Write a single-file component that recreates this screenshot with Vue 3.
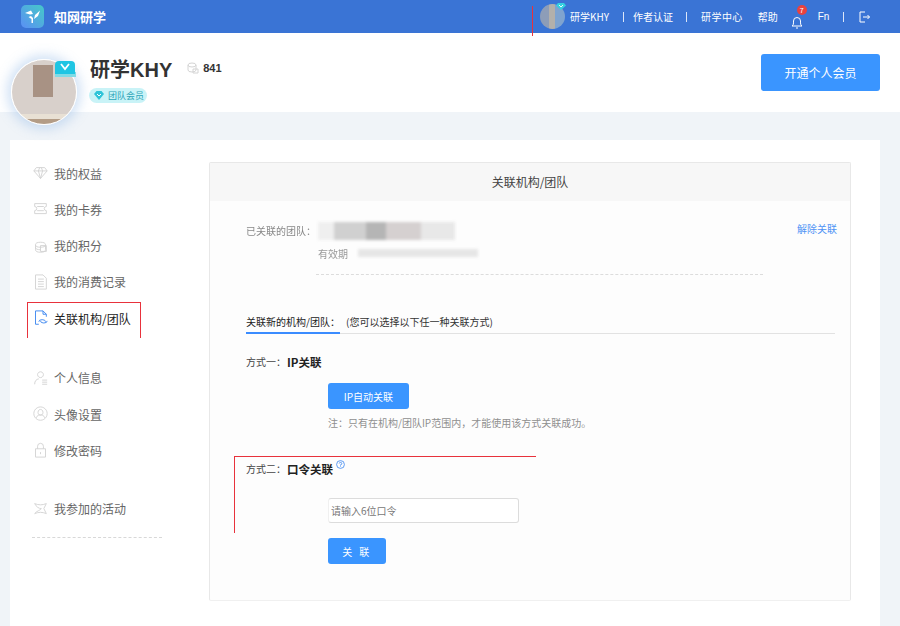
<script setup>
const groups = [
  { items: [
    { label: '我的权益', d: 'M4 3h10l3 4-8 9-8-9zM1 7h16M6.500 7 9 16l2.500-9M6.500 7 8 3M11.500 7 10 3' },
    { label: '我的卡券', d: 'M2 3h14v3.500a2.500 2.500 0 0 0 0 5V15H2v-3.500a2.500 2.500 0 0 0 0-5zM5 6.500h8M5 11.500h8' },
    { label: '我的积分', d: 'M3 8a6 3 0 0 1 12 0v6a6 3 0 0 1-12 0zM3 8a6 3 0 0 0 12 0M3 11a6 3 0 0 0 6 3M9 9h7v7H9z' },
    { label: '我的消费记录', d: 'M3 1h9l4 4v13H3zM6 6h7M6 9h7M6 12h7M6 15h7' },
    { label: '关联机构/团队', active: true, d: 'M12 1H3v16h4M12 1l4 4v3M12 1v4h4M7 14a4 2.500 0 0 1 8 0M17 13a4 2.500 0 0 1-8 0' }
  ] },
  { items: [
    { label: '个人信息', d: 'M9 2a3.500 3.500 0 1 1-.01 0M2 17c0-4 2-6 5-6.500M11 12h6M11 14.500h6M11 17h6' },
    { label: '头像设置', d: 'M9 1a8 8 0 1 1-.01 0M9 4a3 3.500 0 1 1-.01 0M4 14c1-3 3-3.500 5-3.500s4 .5 5 3.500' },
    { label: '修改密码', d: 'M3 8h12v10H3zM5.500 8V5a3.500 3.500 0 0 1 7 0v3M9 12v2.500' }
  ] },
  { items: [
    { label: '我参加的活动', d: 'M2 3c5 2 9 2 14 0l-3 6 3 6c-5-2-9-2-14 0 2-3 7-4 8-6-3 0-6-2-8-6z' }
  ] }
]
</script>

<template>
  <div class="page">
    <header class="topbar">
      <svg class="logo" viewBox="0 0 23 23">
        <defs>
          <linearGradient id="lg" x1="0" y1="1" x2="1" y2="0">
            <stop offset="0" stop-color="#5b8ff5" />
            <stop offset="1" stop-color="#45c8c8" />
          </linearGradient>
        </defs>
        <rect width="23" height="23" rx="5" fill="url(#lg)" />
        <path d="M4 8l6-2.500 2 3.500-3 .5zM19 5.500 14 10l-1 4 4-3zM10 11l2 2v5h-1.500v-4l-3-2z" fill="#fff" />
      </svg>
      <span class="brand">知网研学</span>
      <div class="user-links">
        <div class="mini-avatar">
          <svg class="mini-v" viewBox="0 0 10 7" width="10" height="7">
            <path d="M2 0h6l2 2.500L5 7 0 2.500z" fill="#35d0e0" />
            <path d="M3 2l2 2 2-2" fill="none" stroke="#fff" stroke-width=".9" />
          </svg>
        </div>
        <span class="link user">研学KHY</span>
        <i class="sep s1"></i>
        <span class="link">作者认证</span>
        <i class="sep s2"></i>
        <span class="link center">研学中心</span>
        <span class="link help">帮助</span>
        <div class="bell">
          <svg viewBox="0 0 12 14" width="12" height="14" fill="none" stroke="#fff" stroke-width="1">
            <path d="M1 11c1.500-1 1.500-2 1.500-5a3.500 3.500 0 0 1 7 0c0 3 0 4 1.500 5zM5 13h2" />
          </svg>
          <b class="dot">7</b>
        </div>
        <span class="link fn">Fn</span>
        <i class="sep s3"></i>
        <svg class="logout" viewBox="0 0 11 12" width="11" height="12" fill="none" stroke="#fff" stroke-width="1">
          <path d="M6 1H1v10h5M4 6h6.500M8.500 4l2 2-2 2" />
        </svg>
      </div>
    </header>

    <section class="profile">
      <div class="avatar">
        <div class="avatar-face"></div>
        <i class="avatar-band"></i>
        <svg class="avatar-v" viewBox="0 0 20 13" width="20" height="13">
          <path d="M4 0h12a4 4 0 0 1 4 4v9H0V4a4 4 0 0 1 4-4z" fill="#1fc5e3" />
          <path d="M6 3l4 5 4-5" fill="none" stroke="#fff" stroke-width="1.800" />
        </svg>
      </div>
      <div class="who">
        <div class="name-row">
          <span class="name">研学KHY</span>
          <svg class="coin" viewBox="0 0 12 12" width="12" height="12" fill="none" stroke="#d4d4d4" stroke-width="1">
            <path d="M1 3a4 2 0 0 1 8 0v5a4 2 0 0 1-8 0zM1 3a4 2 0 0 0 8 0M6 7h5v4H6z" />
          </svg>
          <span class="points">841</span>
        </div>
        <div class="pill">
          <svg viewBox="0 0 10 9" width="10" height="9"><path d="M2.500 0h5L10 3 5 9 0 3z" fill="#2fc4d8" /><path d="M3 3l2 2 2-2" stroke="#fff" fill="none" /></svg>
          <span>团队会员</span>
        </div>
      </div>
      <button class="vip-btn">开通个人会员</button>
    </section>

    <main class="main">
      <nav class="side">
        <div v-for="(group, g) in groups" :key="g" class="nav-group">
          <div v-for="item in group.items" :key="item.label" class="nav-item" :class="{ active: item.active }">
            <svg viewBox="0 0 18 19" width="15" height="16" fill="none" stroke="currentColor" stroke-width="1.100" class="nav-icon">
              <path :d="item.d" />
            </svg>
            <span>{{ item.label }}</span>
          </div>
        </div>
        <div class="side-rule"></div>
      </nav>

      <section class="card">
        <h2 class="card-head">关联机构/团队</h2>
        <div class="card-body">
          <div class="linked">
            <span class="linked-label">已关联的团队&#xFF1A;</span>
            <div class="linked-info">
              <div class="blur-name"></div>
              <div class="validity">
                <span class="validity-label">有效期</span>
                <i class="blur-date"></i>
              </div>
              <div class="linked-rule"></div>
            </div>
            <a class="unlink">解除关联</a>
          </div>

          <div class="tabs">
            <span class="tab">关联新的机构/团队&#xFF1A;</span>
            <span class="tab-note">(您可以选择以下任一种关联方式)</span>
          </div>

          <div class="way way-one"><span>方式一&#xFF1A;</span><b>IP关联</b></div>
          <div class="indent">
            <button class="btn auto">IP自动关联</button>
            <p class="note">注&#xFF1A;只有在机构/团队IP范围内&#xFF0C;才能使用该方式关联成功。</p>
          </div>

          <div class="way way-two">
            <span>方式二&#xFF1A;</span><b>口令关联</b>
            <svg class="help-icon" viewBox="0 0 9 9" width="9" height="9" fill="none" stroke="#3a85f0" stroke-width=".8">
              <circle cx="4.500" cy="4.500" r="3.900" />
              <path d="M3.200 3.500a1.300 1.200 0 1 1 1.300 1.300V5.600M4.500 6.300v.6" />
            </svg>
          </div>
          <div class="indent">
            <input class="code" placeholder="请输入6位口令" />
            <button class="btn link-btn">关 联</button>
          </div>
        </div>
      </section>
    </main>

    <i class="mark mark-a"></i>
    <i class="mark mark-b"></i>
    <i class="mark mark-c"></i>
  </div>
</template>

<style>
html, body { margin: 0; background: #f0f4f8; }
</style>

<style scoped>
.page {
  position: relative;
  width: 900px;
  height: 626px;
  overflow: hidden;
  background: #f0f4f8;
  font-family: "Noto Sans CJK SC", "Liberation Sans", sans-serif;
  color: #333;
}
.topbar {
  height: 33px;
  background: #3a74d5;
  display: flex;
  align-items: center;
  padding-left: 21px;
  color: #fff;
}
.logo { width: 23px; height: 23px; }
.brand { margin-left: 10px; font-size: 13px; font-weight: 700; }
.user-links { margin-left: 434px; display: flex; align-items: center; }
.mini-avatar {
  position: relative;
  width: 25px;
  height: 25px;
  border-radius: 50%;
  background:
    linear-gradient(90deg, #8d9db8 0 35%, #b3b0ab 35% 60%, #7fa3cf 60%);
}
.mini-v { position: absolute; right: -1px; top: -1px; }
.link { font-size: 10px; line-height: 1; white-space: nowrap; }
.user { margin-left: 5px; }
.sep { width: 1px; height: 10px; background: #dbe6f8; }
.s1 { margin: 0 9px 0 14px; }
.s2 { margin: 0 14px 0 13px; }
.s3 { margin: 0 15px 0 14px; }
.center { letter-spacing: .4px; }
.help { margin-left: 15px; }
.bell { position: relative; margin-left: 13px; height: 14px; }
.dot {
  position: absolute;
  left: 6px;
  top: -5px;
  width: 10px;
  height: 10px;
  border-radius: 50%;
  background: #e8423f;
  font-size: 7px;
  line-height: 10px;
  font-weight: 400;
  text-align: center;
}
.fn { margin-left: 15px; font-family: "Liberation Sans", sans-serif; }

.profile {
  height: 79px;
  background: #fff;
  display: flex;
  align-items: flex-start;
  padding: 0 20px 0 11px;
  box-sizing: border-box;
}
.avatar {
  position: relative;
  z-index: 2;
  width: 66px;
  height: 66px;
  margin-top: 26px;
}
.avatar-face {
  width: 66px;
  height: 66px;
  border-radius: 50%;
  border: 1px solid #fff;
  box-sizing: border-box;
  box-shadow: 0 0 12px 4px rgba(120, 170, 225, .35);
  background:
    linear-gradient(90deg, transparent 0 33%, #a89284 33% 64%, transparent 64%) 0 5px / 100% 32px no-repeat,
    linear-gradient(180deg, #d8d0cb 0 84%, #e8e0d4 84% 92%, #b39c86 92%);
}
.avatar-band {
  position: absolute;
  left: 44px;
  top: 13px;
  width: 21px;
  height: 5px;
  background: #7fdbe6;
}
.avatar-v { position: absolute; right: 2px; top: 2px; }
.who { margin-left: 13px; padding-top: 23px; }
.name-row { display: flex; align-items: center; height: 24px; }
.name { font-size: 20px; font-weight: 700; color: #333; font-family: "Liberation Sans", "Noto Sans CJK SC", sans-serif; }
.coin { margin-left: 15px; }
.points { margin-left: 4px; font-size: 11px; font-weight: 700; font-family: "Liberation Sans", sans-serif; }
.pill {
  display: inline-flex;
  align-items: center;
  gap: 4px;
  height: 15px;
  margin: 8px 0 0 -1px;
  padding: 0 3px 0 5px;
  border-radius: 8px;
  background: #c9f3f7;
  color: #2ba5b8;
  font-size: 9px;
  line-height: 1;
}
.vip-btn {
  margin: 21px 0 0 auto;
  width: 119px;
  height: 37px;
  border: 0;
  border-radius: 3px;
  background: #3a95ff;
  color: #fff;
  font: 12px "Noto Sans CJK SC", sans-serif;
}

.main {
  margin: 28px 20px 0 10px;
  height: 486px;
  background: #fff;
  display: flex;
  align-items: flex-start;
}
.side { width: 152px; margin-left: 22px; margin-top: 15px; flex: none; }
.nav-group + .nav-group { margin-top: 23.500px; }
.nav-group + .nav-group + .nav-group { margin-top: 22px; }
.nav-item {
  height: 36.250px;
  display: flex;
  align-items: center;
  gap: 6px;
  font-size: 12px;
  color: #666;
  white-space: nowrap;
}
.nav-icon { color: #d2d2d2; flex: none; margin-left: 1px; }
.nav-item.active { color: #222; }
.active .nav-icon { color: #3a85f0; }
.side-rule { width: 130px; margin-top: 10px; border-top: 1px dashed #d8d8d8; }

.card {
  width: 642px;
  height: 439px;
  margin: 22px 0 0 25px;
  box-sizing: border-box;
  border: 1px solid #e8e8e8;
  border-bottom-color: #f0f0f0;
  border-radius: 2px;
  background: #fdfdfd;
}
.card-head {
  margin: 0;
  height: 38px;
  background: #f7f7f7;
  font-size: 12px;
  font-weight: 400;
  line-height: 38px;
  text-align: center;
  color: #444;
}
.card-body { padding: 0 15px 0 36px; }
.linked {
  height: 95px;
  display: flex;
  font-size: 10px;
  position: relative;
}
.linked-label { width: 72px; margin-top: 23px; color: #888; filter: blur(.7px); line-height: 14px; white-space: nowrap; }
.linked-info { width: 445px; padding-top: 21px; }
.blur-name {
  width: 137px;
  height: 18px;
  filter: blur(1.5px);
  background: linear-gradient(90deg, #efefef 0 12%, #d0d0d0 12% 35%, #b5b5b5 35% 50%, #d5d0d0 50% 75%, #e8e8e8 75%);
}
.validity { display: flex; align-items: center; margin-top: 6px; height: 14px; }
.validity-label { color: #999; filter: blur(.6px); }
.blur-date { width: 120px; height: 8px; margin-left: 10px; background: #e6e6e6; filter: blur(1.5px); }
.linked-rule { margin-top: 14px; border-top: 1px dashed #dcdcdc; margin-left: -2px; }
.unlink { margin: 21px -2px 0 auto; color: #4f93f5; white-space: nowrap; line-height: 14px; }
.tabs {
  height: 38px;
  box-sizing: border-box;
  padding-top: 19px;
  border-bottom: 1px solid #e2e2e2;
  display: flex;
  font-size: 10px;
  line-height: 14px;
  position: relative;
}
.tab { color: #222; white-space: nowrap; width: 100px; }
.tab::after {
  content: "";
  position: absolute;
  left: 0;
  bottom: -1px;
  width: 94px;
  height: 2px;
  background: #3a8cff;
}
.tab-note { color: #333; }
.way { display: flex; align-items: center; font-size: 10px; color: #444; line-height: 14px; position: relative; }
.way b { font-size: 11.500px; color: #222; margin-left: 1px; font-weight: 700; }
.way-one { margin-top: 21px; }
.way-two { margin-top: 32px; }
.help-icon { margin: -10px 0 0 3px; }
.indent { margin-left: 82px; }
.btn {
  display: block;
  border: 0;
  border-radius: 3px;
  background: #3a95ff;
  color: #fff;
  font: 10px "Noto Sans CJK SC", sans-serif;
  padding: 0;
}
.auto { width: 81px; height: 26px; margin-top: 14px; }
.note { margin: 7px 0 0; font-size: 10px; line-height: 14px; color: #8f8f8f; white-space: nowrap; }
.code {
  display: block;
  width: 191px;
  height: 25px;
  margin-top: 22px;
  box-sizing: border-box;
  border: 1px solid #dcdcdc;
  border-left-color: #f0f0f0;
  border-radius: 3px;
  padding: 0 2px;
  background: #fff;
  font: 10px "Noto Sans CJK SC", sans-serif;
  outline: 0;
}
.code::placeholder { color: #777; opacity: 1; }
.link-btn { width: 58px; height: 26px; margin-top: 15px; letter-spacing: 2.500px; }

.mark { position: absolute; z-index: 5; pointer-events: none; box-sizing: border-box; }
.mark-a { left: 532px; top: 6px; width: 1px; height: 30px; background: #e8323c; }
.mark-b { left: 27px; top: 302px; width: 114px; height: 36px; border: 1px solid #e8323c; border-bottom: 0; }
.mark-c { left: 234px; top: 456px; width: 302px; height: 77px; border-top: 1px solid #e8323c; border-left: 1px solid #e8323c; }
</style>
